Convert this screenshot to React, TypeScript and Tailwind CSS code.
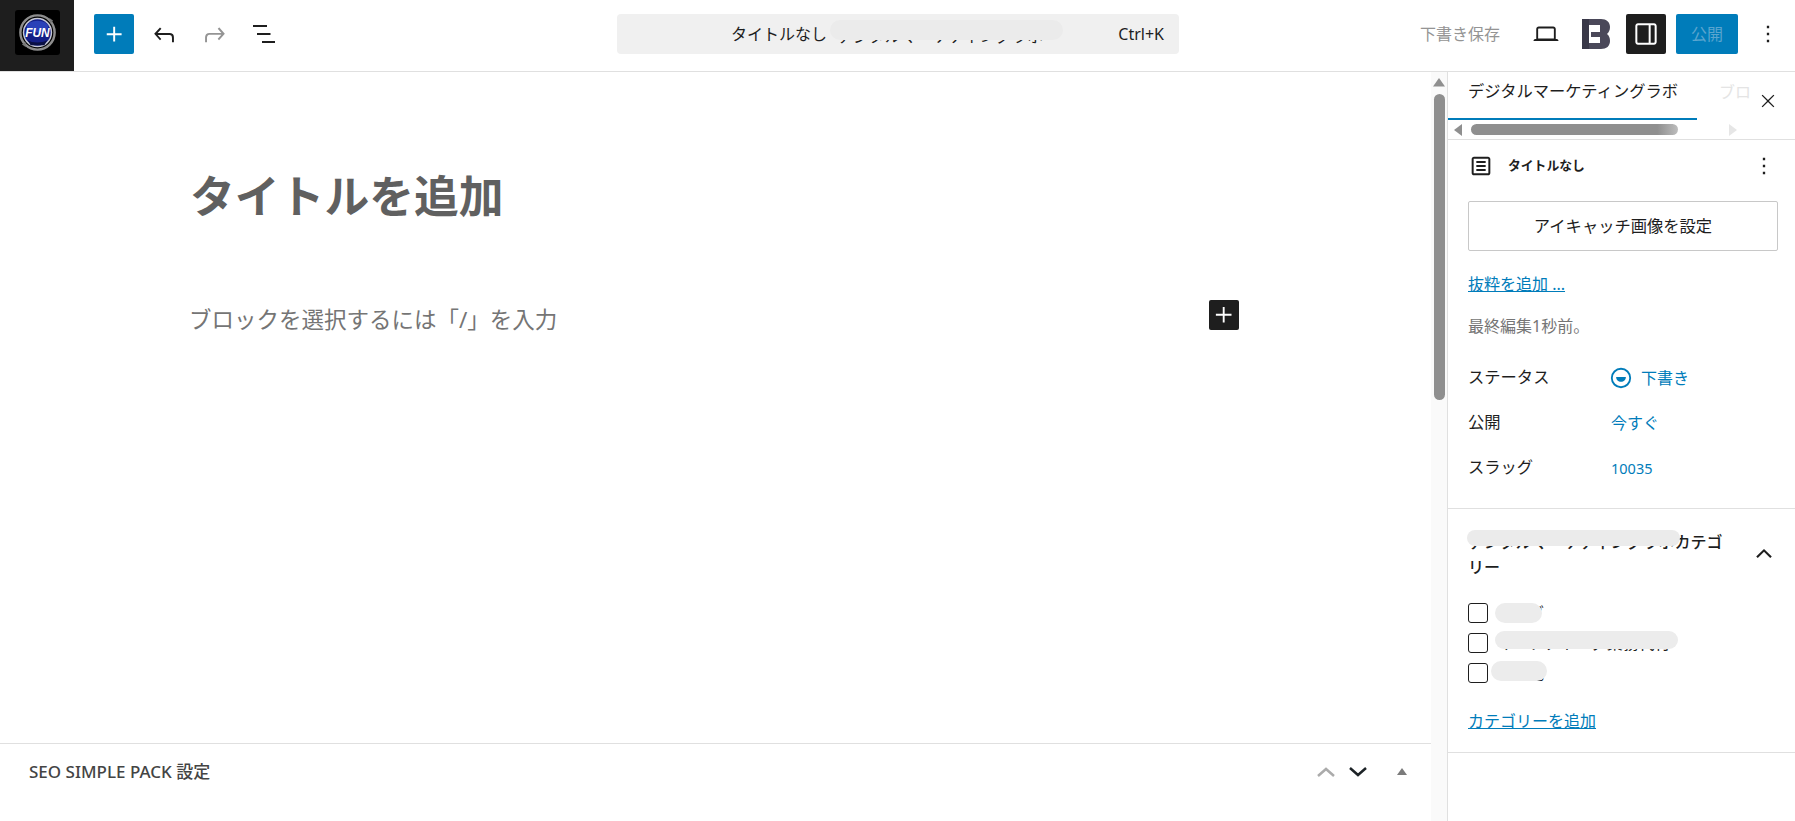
const F = "font-['Noto_Sans','Noto_Sans_CJK_JP',sans-serif]";

function Logo() {
  return (
    <svg width="45" height="45" viewBox="0 0 46 46">
      <rect width="46" height="46" rx="3" fill="#000" />
      <circle cx="23" cy="23" r="17.500" fill="none" stroke="#8d8d8d" strokeWidth="2.500" />
      <circle cx="23" cy="23" r="15" fill="#c4c7d6" />
      <circle cx="23" cy="23" r="13.500" fill="#141f86" />
      <ellipse cx="23" cy="17" rx="11" ry="6" fill="#2a41b8" />
      <path d="M13 31c5 3 14 3 20 0l-3 5H16z" fill="#0a0f44" />
      <path d="M35 8l4 3-3 3zM11 38l-4-3 4-2z" fill="#777" />
      <text x="23" y="27.500" textAnchor="middle" fontSize="12.500" fontWeight="800" fontStyle="italic" fill="#fff" fontFamily="Liberation Sans, sans-serif" textLength="25" lengthAdjust="spacingAndGlyphs">FUN</text>
    </svg>
  );
}

function BrandB() {
  return (
    <svg width="28" height="30" viewBox="0 0 28 30">
      <path d="M0 0H7V30H0Z" fill="#393848" />
      <path d="M7 0H19C24.500 0 28 3 28 8C28 11 26.800 13.400 25 15C27 16.600 28 19 28 22C28 27 24.500 30 19 30H7V24H18V18H9V13H18V6H7Z" fill="#4a4859" />
    </svg>
  );
}

function Patch({ className }: { className: string }) {
  return <span className={"absolute rounded-full " + className} />;
}

function Kebab({ className }: { className: string }) {
  return (
    <svg className={className} width="28" height="28" viewBox="0 0 24 24" fill="#1e1e1e">
      <path d="M13 19h-2v-2h2v2Zm0-6h-2v-2h2v2Zm0-6h-2V5h2v2Z" />
    </svg>
  );
}

function Row({ label, children }: { label: string; children: React.ReactNode }) {
  return (
    <div className="flex items-center h-[45px]">
      <span className="w-[143px] text-[16.300px] text-[#1e1e1e]">{label}</span>
      <span className="flex items-center text-[16px] text-[#007cba]">{children}</span>
    </div>
  );
}

function Check({ children }: { children: React.ReactNode }) {
  return (
    <div className="relative flex items-center gap-2 h-[30px] text-[16px] text-[#1e1e1e]">
      <span className="w-5 h-5 rounded-[3px] border border-[#1e1e1e] bg-white shrink-0" />
      {children}
    </div>
  );
}

export default function App() {
  return (
    <div className={"w-[1795px] h-[821px] flex flex-col overflow-hidden bg-white " + F}>
      <header className="h-[72px] shrink-0 flex border-b border-[#e0e0e0]">
        <div className="w-[74px] bg-[#1e1e1e] flex items-center justify-center shrink-0 pb-[6px] pl-px">
          <Logo />
        </div>
        <div className="flex-1 min-w-0 flex items-center pb-[3px]">
          <button className="ml-5 w-10 h-10 rounded-[2px] bg-[#007cba] flex items-center justify-center">
            <svg width="31" height="31" viewBox="0 0 24 24" fill="#fff"><path d="M11 12.500V17.500H12.500V12.500H17.500V11H12.500V6H11V11H6V12.500H11Z" /></svg>
          </button>
          <svg className="ml-[14.500px]" width="31" height="31" viewBox="0 0 24 24" fill="#1e1e1e"><path d="M18.300 11.700c-.6-.6-1.400-.9-2.300-.9H6.700l2.900-3.300-1.100-1-4.500 5L8.500 16.500l1-1.100-2.800-3.100H16c.5 0 .9.200 1.200.5.300.4.6 1.100.6 2V18h1.500v-3.700c0-1.300-.4-2-1-2.600Z" /></svg>
          <svg className="ml-[19px]" width="31" height="31" viewBox="0 0 24 24" fill="#949494"><path d="M15.600 6.500l-1.100 1 2.900 3.300H8c-.9 0-1.700.3-2.300.9-.7.7-1 1.700-1 2.900V18h1.500v-3.400c0-.8.2-1.500.6-1.900.3-.3.7-.5 1.200-.5h9.300l-2.800 3.100 1 1.100 4.500-5-4.400-5Z" /></svg>
          <svg className="ml-[22.500px]" width="24" height="24" viewBox="0 0 24 24" fill="#1e1e1e"><path d="M1 3h14v2H1zM5 11h13.500v2H5zM10 19h13v2H10z" /></svg>
          <div className="relative ml-[341px] w-[562px] h-10 rounded-[4px] bg-[#f0f0f0] flex items-center shrink-0">
            <span className="ml-[114px] text-[16px] text-[#1e1e1e] whitespace-nowrap leading-none">タイトルなし</span>
            <span className="ml-[10px] text-[16px] text-[#1e1e1e] whitespace-nowrap leading-none mt-1">デジタルマーケティングラボ</span>
            <Patch className="left-[213px] top-[6px] w-[233px] h-[20px] bg-[#ebebeb]" />
            <span className="ml-auto mr-[15px] text-[16px] text-[#1e1e1e]">Ctrl+K</span>
          </div>
          <div className="ml-auto flex items-center">
            <span className="text-[16px] text-[#949494]">下書き保存</span>
            <svg className="ml-[31px]" width="30" height="30" viewBox="0 0 24 24" fill="#1e1e1e"><path d="M20.500 16h-.7V8c0-1.100-.9-2-2-2H6.200c-1.100 0-2 .9-2 2v8h-.7c-.8 0-1.500.7-1.500 1.500h20c0-.8-.7-1.500-1.500-1.500ZM5.700 8c0-.3.2-.5.5-.5h11.600c.3 0 .5.200.5.500v7.600H5.700V8Z" /></svg>
            <span className="ml-[21px] flex"><BrandB /></span>
            <button className="ml-[16px] w-10 h-10 rounded-[2px] bg-[#1e1e1e] flex items-center justify-center">
              <svg width="32" height="32" viewBox="0 0 24 24" fill="#fff"><path d="M18 4H6c-1.100 0-2 .9-2 2v12c0 1.100.9 2 2 2h12c1.100 0 2-.9 2-2V6c0-1.100-.9-2-2-2ZM5.500 18V6c0-.3.2-.5.5-.5h8v13H6c-.3 0-.5-.2-.5-.5Zm13 0c0 .3-.2.5-.5.5h-2.500v-13H18c.3 0 .5.200.5.500v12Z" /></svg>
            </button>
            <button className="ml-[10px] w-[62px] h-10 rounded-[2px] bg-[#007cba] text-[16px] text-[#5aa5cf]">公開</button>
            <Kebab className="ml-[16px] mr-[13px]" />
          </div>
        </div>
      </header>

      <div className="flex flex-1 min-h-0">
        <main className="flex-1 min-w-0 flex flex-col">
          <div className="flex-1 min-h-0 pl-[190px] pr-[192px]">
            <h1 className="mt-[95px] text-[44.800px] leading-[58px] font-bold text-[#606060]">タイトルを追加</h1>
            <div className="mt-[75px] flex items-start justify-between">
              <p className="pt-[5px] text-[22.500px] leading-[30px] text-[#757575] -ml-px">ブロックを選択するには「/」を入力</p>
              <button className="w-[30px] h-[30px] rounded-[2px] bg-[#1e1e1e] flex items-center justify-center">
                <svg width="30" height="30" viewBox="0 0 24 24" fill="#fff"><path d="M11 12.500V18H12.500V12.500H18V11H12.500V5.500H11V11H5.500V12.500H11Z" /></svg>
              </button>
            </div>
          </div>
          <div className="h-[78px] shrink-0 border-t border-[#e0e0e0] flex items-center pl-[29px] pr-[20px] pb-[22px]">
            <span className="text-[17px] font-medium text-[#444]">SEO SIMPLE PACK 設定</span>
            <svg className="ml-auto" width="20" height="12" viewBox="0 0 20 12" fill="none" stroke="#ababab" strokeWidth="2.500"><path d="M2 10l8-7 8 7" /></svg>
            <svg className="ml-[12px]" width="20" height="12" viewBox="0 0 20 12" fill="none" stroke="#1d2327" strokeWidth="2.500"><path d="M2 2l8 7 8-7" /></svg>
            <svg className="ml-[28px] mr-[3px]" width="12" height="10" viewBox="0 0 12 10" fill="#7b7b7b"><path d="M6 1l5 7H1z" /></svg>
          </div>
        </main>

        <div className="w-[16px] shrink-0 bg-[#fafafa] flex flex-col items-center">
          <svg className="mt-[5px]" width="14" height="11" viewBox="0 0 14 11" fill="#8f8f8f"><path d="M7 1l6 8.500H1z" /></svg>
          <div className="mt-[6px] w-[11px] h-[306px] rounded-full bg-[#8f8f8f]" />
        </div>

        <aside className="w-[348px] shrink-0 border-l border-[#e0e0e0] flex flex-col">
          <div className="relative h-[48px] shrink-0 flex">
            <div className="w-[249px] h-[48px] border-b-2 border-[#007cba] flex items-center pl-[20px] pb-[8px] text-[16.300px] text-[#1e1e1e] whitespace-nowrap">デジタルマーケティングラボ</div>
            <span className="ml-[22px] h-full flex items-center pb-[8px] text-[16px] text-[#e4e4e4] whitespace-nowrap">ブロ</span>
            <svg className="absolute right-[17px] top-[19px]" width="20" height="20" viewBox="0 0 24 24" fill="#1e1e1e"><path d="M13.100 12l6.500-6.500-1.100-1.100-6.500 6.500-6.500-6.500-1.100 1.100 6.500 6.500-6.500 6.500 1.100 1.100 6.500-6.500 6.500 6.500 1.100-1.100z" /></svg>
          </div>
          <div className="h-[20px] shrink-0 flex items-center border-b border-[#e0e0e0]">
            <svg className="ml-[5px]" width="10" height="12" viewBox="0 0 10 12" fill="#8f8f8f"><path d="M1 6l8-6v12z" /></svg>
            <div className="ml-[8px] w-[207px] h-[11px] rounded-full bg-linear-to-r from-[#8f8f8f] from-90% to-[#bdbdbd]" />
            <svg className="ml-[50px]" width="10" height="12" viewBox="0 0 10 12" fill="#e6e6e6"><path d="M9 6L1 0v12z" /></svg>
          </div>

          <div className="px-[20px] shrink-0">
            <div className="h-[50px] mt-px flex items-center">
              <svg className="ml-[-1px]" width="28" height="28" viewBox="0 0 24 24" fill="#1e1e1e"><path d="M18 4H6c-1.100 0-2 .9-2 2v12c0 1.100.9 2 2 2h12c1.100 0 2-.9 2-2V6c0-1.100-.9-2-2-2Zm.3 14c0 .2-.1.3-.3.3H6c-.2 0-.3-.1-.3-.3V6c0-.2.1-.3.3-.3h12c.2 0 .3.100.3.300v12ZM8 7.800h8v1.700H8V7.800Zm0 3.400h8v1.700H8v-1.700Zm0 3.300h8v1.700H8v-1.700Z" /></svg>
              <span className="ml-[13px] text-[12.800px] font-semibold text-[#1e1e1e]">タイトルなし</span>
              <Kebab className="ml-auto -mr-[3px]" />
            </div>
            <button className="mt-[10px] w-[310px] h-[50px] rounded-[2px] border border-[#c8c8c8] text-[16.300px] text-[#1e1e1e]">アイキャッチ画像を設定</button>
            <div className="mt-[20px] text-[16px] leading-[26px] text-[#007cba] underline">抜粋を追加 ...</div>
            <div className="mt-[16px] text-[16px] leading-[26px] text-[#757575]">最終編集1秒前。</div>
            <div className="mt-[16px]">
              <Row label="ステータス">
                <svg className="mr-[7px] -ml-[3px]" width="26" height="26" viewBox="0 0 24 24"><circle cx="12" cy="12" r="8.500" fill="none" stroke="#007cba" strokeWidth="1.700" /><path d="M7.500 11h9c0 2.600-2 4.500-4.500 4.500S7.500 13.600 7.500 11Z" fill="#007cba" /></svg>
                下書き
              </Row>
              <Row label="公開">今すぐ</Row>
              <Row label="スラッグ"><span className="mt-[3px] text-[14.500px]">10035</span></Row>
            </div>
          </div>

          <div className="mt-[18px] px-[20px] border-t border-[#e0e0e0] shrink-0 pb-[19px]">
            <div className="relative flex items-start pt-[21px]">
              <span className="w-[266px] text-[16px] leading-[25px] font-medium text-[#1e1e1e]">デジタルマーケティングラボカテゴリー</span>
              <Patch className="-left-[1px] top-[21px] w-[213px] h-[16px] bg-[#ebebeb]" />
              <svg className="ml-auto mt-[6px] -mr-[6px]" width="34" height="34" viewBox="0 0 24 24" fill="#1e1e1e"><path d="M6.500 14.500l1.100 1L12 11.200l4.400 4.300 1.100-1-5.500-5.400z" /></svg>
            </div>
            <div className="mt-[18px]">
              <Check><span>ブログ</span><Patch className="left-[27px] top-[5px] w-[47px] h-[20px] bg-[#ececec]" /></Check>
              <Check><span>マーケティング業務代行</span><Patch className="left-[27px] top-[3px] w-[183px] h-[18px] bg-[#ececec]" /></Check>
              <Check><span>その他</span><Patch className="left-[23px] top-[3px] w-[56px] h-[20px] bg-[#ececec]" /></Check>
            </div>
            <div className="mt-[21px] text-[16px] leading-[24px] text-[#007cba] underline">カテゴリーを追加</div>
          </div>
          <div className="border-t border-[#e0e0e0]" />
        </aside>
      </div>
    </div>
  );
}
